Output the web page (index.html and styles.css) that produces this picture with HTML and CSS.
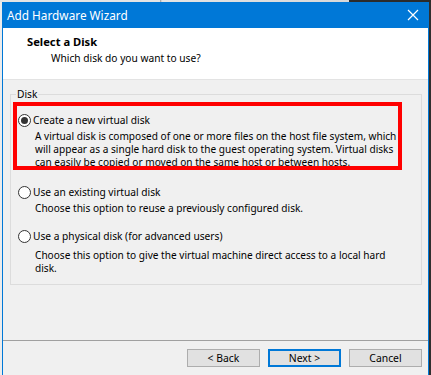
FILE: index.html
```html
<!DOCTYPE html>
<html lang="en">

<head>
   <meta charset="UTF-8">
   <meta name="viewport" content="width=device-width, initial-scale=1.0">
   <title>Add Hardware Wizard</title>
   <link rel="stylesheet" href="styles.css">
</head>

<body>
   <div class="backstrip"></div>

   <div class="window">
      <!-- Title bar -->
      <div class="titlebar">
         <span class="title">Add Hardware Wizard</span>
         <svg class="close" width="12" height="12" viewBox="0 0 12 12">
            <path d="M1 1 L11 11 M11 1 L1 11" stroke="#fff" stroke-width="1.2" fill="none" />
         </svg>
      </div>

      <!-- Wizard header -->
      <div class="header">
         <div class="header-title">Select a Disk</div>
         <div class="header-sub">Which disk do you want to use?</div>
      </div>

      <!-- Page body -->
      <div class="content">
         <fieldset class="group">
            <legend>Disk</legend>
            <div class="options">
               <div class="highlight"></div>

               <div class="option">
                  <div class="option-label"><span class="radio checked"></span>Create a new virtual disk</div>
                  <div class="option-desc">A virtual disk is composed of one or more files on the host file system, which will appear as a single hard disk to the guest operating system. Virtual disks can easily be copied or moved on the same host or between hosts.</div>
               </div>

               <div class="option option-second">
                  <div class="option-label"><span class="radio"></span>Use an existing virtual disk</div>
                  <div class="option-desc">Choose this option to reuse a previously configured disk.</div>
               </div>

               <div class="option option-third">
                  <div class="option-label"><span class="radio"></span>Use a physical disk (for advanced users)</div>
                  <div class="option-desc">Choose this option to give the virtual machine direct access to a local hard disk.</div>
               </div>
            </div>
         </fieldset>
      </div>

      <!-- Buttons -->
      <div class="footer">
         <button class="btn">&lt; Back</button>
         <button class="btn btn-default">Next &gt;</button>
         <button class="btn">Cancel</button>
      </div>
   </div>
</body>

</html>
```

FILE: styles.css
```css
body {
   margin: 0;
   height: 375px;
   overflow: hidden;
   font-family: 'Noto Sans', 'Liberation Sans', sans-serif;
   font-size: 10.2px;
   color: #000;
   background: linear-gradient(to right, #ececec 2px, #2f2f2f 2px);
}

.backstrip {
   height: 2px;
   background: linear-gradient(to right, #e4e4e4 160px, #9a9a9a 160px, #e4e4e4 162px, #d8d8d8 349px, #2b2b2b 349px);
}

.window {
   width: 425px;
   height: 373px;
   margin-left: 2px;
   border-left: 1px solid #0078d7;
   border-right: 1px solid #0078d7;
   background-color: #f0f0f0;
   display: flex;
   flex-direction: column;
}

.titlebar {
   height: 26px;
   background-color: #0078d7;
   display: flex;
   align-items: center;
   justify-content: space-between;
   padding: 0 9px 0 4px;
}

.title {
   color: #fff;
   font-size: 11.8px;
   line-height: 20px;
   margin-top: -1px;
}

.close {
   display: block;
   margin-top: -1px;
}

.header {
   height: 52px;
   background-color: #fff;
   border-bottom: 1px solid #e3e3e3;
   padding: 7px 0 0 24px;
   box-sizing: border-box;
}

.header-title {
   font-weight: bold;
   font-size: 11.2px;
   line-height: 14px;
}

.header-sub {
   line-height: 14px;
   margin: 2px 0 0 24px;
}

.content {
   flex: 1;
   padding: 8px 6px 0 7px;
   border-bottom: 1px solid #a0a0a0;
}

.group {
   margin: 0;
   padding: 0;
   min-width: 0;
   height: 197px;
   box-sizing: border-box;
   border: 1px solid #dcdcdc;
}

.group legend {
   margin-left: 5px;
   padding: 0 1px;
   line-height: 13px;
}

.options {
   position: relative;
   padding: 13px 0 0 7px;
}

/* red annotation frame over the first option */
.highlight {
   position: absolute;
   top: 1px;
   left: 2px;
   width: 389px;
   height: 68px;
   box-sizing: border-box;
   border: 4px solid #ff0000;
}

.option-label {
   display: flex;
   align-items: center;
   line-height: 13px;
   gap: 2px;
}

.radio {
   width: 13px;
   height: 13px;
   box-sizing: border-box;
   border: 1px solid #333;
   border-radius: 50%;
   background-color: #fff;
   display: flex;
   align-items: center;
   justify-content: center;
}

.radio.checked::after {
   content: "";
   width: 7px;
   height: 7px;
   border-radius: 50%;
   background-color: #333;
}

.option-desc {
   margin: 3px 0 0 17px;
   width: 364px;
   font-size: 10.1px;
   line-height: 13px;
}

.option-second {
   margin-top: 17px;
}

.option-third {
   margin-top: 15px;
}

.option-third .option-desc {
   margin-top: 6px;
}

.footer {
   height: 34px;
   display: flex;
   justify-content: flex-end;
   gap: 8px;
   padding: 8px 6px 0 0;
   box-sizing: border-box;
}

.btn {
   width: 73px;
   height: 18px;
   padding: 0;
   font-family: inherit;
   font-size: 10.4px;
   color: #000;
   background-color: #e1e1e1;
   border: 1px solid #adadad;
   box-sizing: border-box;
}

.btn-default {
   border: 2px solid #0078d7;
}
```
